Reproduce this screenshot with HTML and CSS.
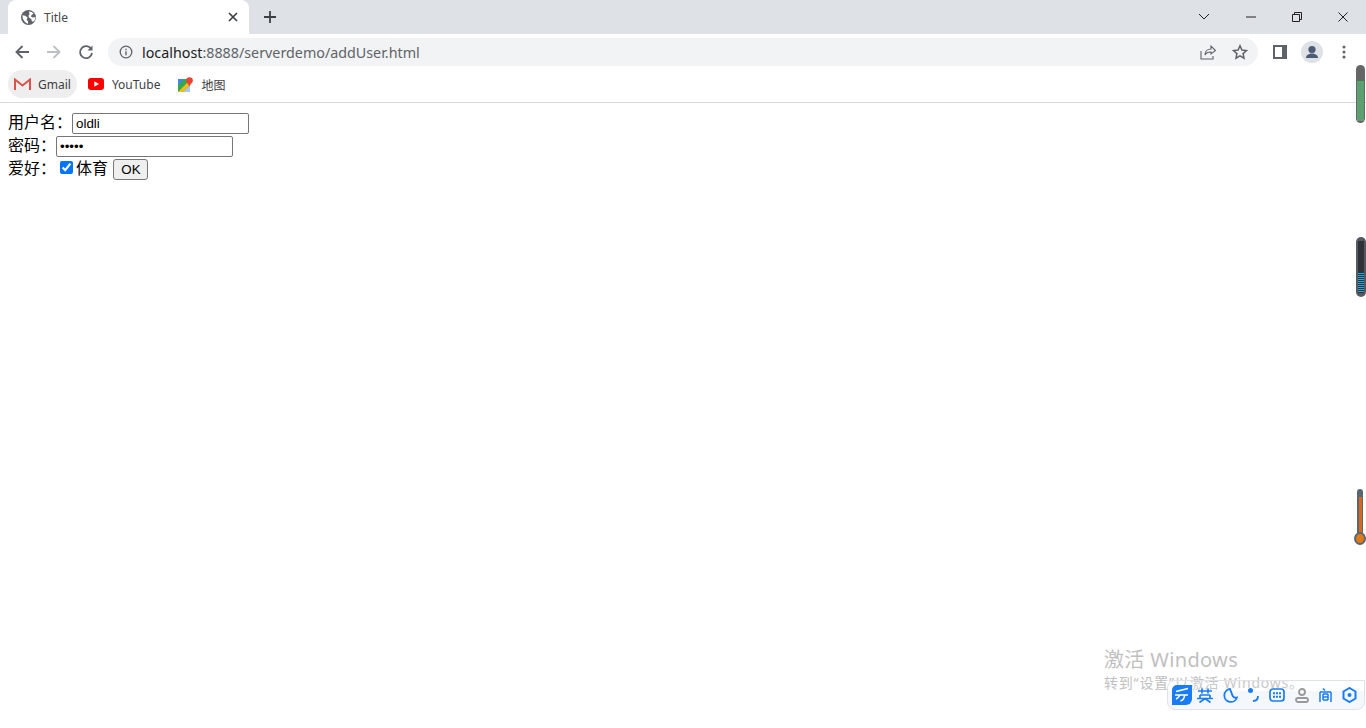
FILE: index.html
```html
<!DOCTYPE html>
<html lang="zh">
<head>
<meta charset="utf-8">
<title>Title</title>
<link rel="stylesheet" href="styles.css">
</head>
<body>
<header class="chrome">
  <div class="tabstrip">
    <div class="tab">
      <svg class="globe" width="15" height="15" viewBox="0 0 16 16"><circle cx="8" cy="8" r="8" fill="#5f6368"/><path d="M1.500 5.500l3 .5 2.500 2-1 2.500 1.500 1.500v3l-3-2-2.500-3.500zM8.500 1.500l3 .5 2 2-2 1-1 2 2 1 3-.5-.5 3-2 2-1.500-.5-.5-2.500-2.500-1.500-.5-2 1-1.500z" fill="#fff"/></svg>
      <span class="tabtitle">Title</span>
      <svg class="tabclose" width="10" height="10" viewBox="0 0 10 10"><path d="M1 1l8 8M9 1l-8 8" stroke="#3c4043" stroke-width="1.700"/></svg>
    </div>
    <svg class="newtab" width="14" height="14" viewBox="0 0 14 14"><path d="M7 1v12M1 7h12" stroke="#3c4043" stroke-width="1.800"/></svg>
    <div class="winbtns">
      <svg class="wb-chev" width="12" height="8" viewBox="0 0 12 8"><path d="M1 1l5 5 5-5" fill="none" stroke="#202124" stroke-width="1"/></svg>
      <svg class="wb-min" width="10" height="2" viewBox="0 0 10 2"><path d="M0 1h10" stroke="#202124" stroke-width="1"/></svg>
      <svg class="wb-max" width="10" height="10" viewBox="0 0 10 10"><path d="M.5 2.500h7v7h-7zM2.500 2.500v-2h7v7h-2" fill="none" stroke="#202124" stroke-width="1"/></svg>
      <svg class="wb-close" width="10" height="10" viewBox="0 0 10 10"><path d="M.5.5l9 9M9.500.5l-9 9" stroke="#202124" stroke-width="1"/></svg>
    </div>
  </div>
  <div class="toolbar">
    <svg class="nav" width="16" height="16" viewBox="0 0 16 16"><path d="M15 8H2.500M8.500 2L2.500 8l6 6" fill="none" stroke="#5f6368" stroke-width="1.900"/></svg>
    <svg class="nav" width="16" height="16" viewBox="0 0 16 16"><path d="M1 8h12.500M7.500 2l6 6-6 6" fill="none" stroke="#bdc1c6" stroke-width="1.900"/></svg>
    <svg class="nav" width="16" height="16" viewBox="0 0 16 16"><path d="M13.300 5.200A6 6 0 1 0 14 9" fill="none" stroke="#5f6368" stroke-width="1.800"/><path d="M14.500 1.500v5h-5z" fill="#5f6368"/></svg>
    <div class="omnibox">
      <svg class="info" width="14" height="14" viewBox="0 0 14 14"><circle cx="7" cy="7" r="5.800" fill="none" stroke="#5f6368" stroke-width="1.300"/><path d="M7 6.200v4M7 3.800v1.400" stroke="#5f6368" stroke-width="1.400"/></svg>
      <span class="url"><span class="host">localhost</span>:8888/serverdemo/addUser.html</span>
      <svg class="share" width="16" height="16" viewBox="0 0 16 16"><path d="M1 7v8h12v-3M5 11c0-4 3-6 6-6V2l4.500 4.500L11 10V8c-3 0-5 1-6 3z" fill="none" stroke="#5f6368" stroke-width="1.100"/></svg>
      <svg class="star" width="16" height="16" viewBox="0 0 16 16"><path d="M8 1.800l1.900 4.200 4.600.5-3.400 3.100.9 4.600L8 11.900l-4 2.300.9-4.600L1.500 6.500 6.100 6z" fill="none" stroke="#5f6368" stroke-width="1.500"/></svg>
    </div>
    <svg class="panel" width="14" height="14" viewBox="0 0 14 14"><path d="M0 0h14v14H0zM2 2v10h7V2z" fill="#5f6368" fill-rule="evenodd"/></svg>
    <svg class="avatar" width="22" height="22" viewBox="0 0 22 22"><circle cx="11" cy="11" r="11" fill="#dee1e6"/><circle cx="11" cy="8.500" r="3.600" fill="#4d5a75"/><path d="M5 17c0-3 3-4.500 6-4.500s6 1.500 6 4.500z" fill="#4d5a75"/></svg>
    <svg class="menu" width="4" height="14" viewBox="0 0 4 14"><circle cx="2" cy="2" r="1.500" fill="#5f6368"/><circle cx="2" cy="7" r="1.500" fill="#5f6368"/><circle cx="2" cy="12" r="1.500" fill="#5f6368"/></svg>
  </div>
  <nav class="bookmarks">
    <div class="bm bm-active">
      <svg width="17" height="12" viewBox="0 0 17 12"><path d="M1 12V1.500l7.500 6 7.500-6V12" fill="none" stroke="#d9534a" stroke-width="2"/></svg>
      <span>Gmail</span>
    </div>
    <div class="bm">
      <svg width="16" height="12" viewBox="0 0 16 12"><rect width="16" height="12" rx="3" fill="#f00"/><path d="M6.300 3.300v5.400L11 6z" fill="#fff"/></svg>
      <span>YouTube</span>
    </div>
    <div class="bm">
      <svg width="15" height="15" viewBox="0 0 15 15"><rect y="2" width="12" height="13" fill="#34a853"/><path d="M0 15L12 3v5l-7 7z" fill="#fbbc04"/><path d="M0 2h6L0 8z" fill="#4285f4"/><path d="M5 15l7-7v7z" fill="#a8c7fa"/><circle cx="11.500" cy="3.500" r="3.300" fill="#ea4335"/><path d="M9 5l2.500 4.500L14 5z" fill="#ea4335"/></svg>
      <span class="cjk">地图</span>
    </div>
  </nav>
</header>
<main class="page">
  <form class="form">
    <div class="row">用户名：<input class="field" type="text" value="oldli"></div>
    <div class="row">密码：<input class="field" type="password" value="12345"></div>
    <div class="row">爱好：<input class="check" type="checkbox" checked>体育 <input class="submit" type="submit" value="OK"></div>
  </form>
</main>

<div class="gauge gauge-net"><div class="gauge-fill green"></div></div>
<div class="gauge gauge-mem"><div class="gauge-fill blue"></div></div>
<div class="thermo"><div class="thermo-bar"></div><div class="thermo-bulb"></div></div>

<div class="watermark">
  <div class="wm-1">激活 Windows</div>
  <div class="wm-2">转到“设置”以激活 Windows。</div>
</div>

<div class="ime">
  <svg class="ime-logo" width="20" height="20" viewBox="0 0 20 20"><path d="M5 0h15v14a6 6 0 0 1-6 6H0V5a5 5 0 0 1 5-5z" fill="#1a7cf5"/><path d="M4 6.500l12-3M3 10h13M12.500 10c0 3-1 5-4 6M8 10c-1 2-2 3-4 4" fill="none" stroke="#fff" stroke-width="1.500"/></svg>
  <svg width="16" height="15" viewBox="0 0 16 15"><path d="M1 3h14M5 .5v5M11 .5v5M3 7h10M3 7v3.500M13 7v3.500M0 10.500h16M2.500 14.500L8 10.500l5.500 4" fill="none" stroke="#1a7cf5" stroke-width="1.700"/></svg>
  <svg width="15" height="15" viewBox="0 0 15 15"><path d="M7 1a6.500 6.500 0 1 0 7 8.500C9 11 9 5 7 1z" fill="none" stroke="#1a7cf5" stroke-width="1.800"/></svg>
  <svg width="11" height="14" viewBox="0 0 11 14"><circle cx="2.500" cy="2.500" r="2.500" fill="#1a7cf5"/><path d="M10 8c0 3-2 5-5 5" fill="none" stroke="#1a7cf5" stroke-width="1.800"/></svg>
  <svg width="16" height="14" viewBox="0 0 16 14"><rect x="1" y="1" width="14" height="12" rx="3" fill="none" stroke="#1a7cf5" stroke-width="1.700"/><path d="M4 5.200h8M4 8.800h8" stroke="#1a7cf5" stroke-width="2" stroke-dasharray="2 1"/></svg>
  <svg width="14" height="15" viewBox="0 0 14 15"><circle cx="7" cy="4" r="3" fill="none" stroke="#999" stroke-width="1.800"/><rect x="1" y="10" width="12" height="4" rx="2" fill="none" stroke="#999" stroke-width="1.800"/></svg>
  <svg width="13" height="14" viewBox="0 0 13 14"><path d="M4 .5l2 2M1 4h11M1 4v10M12 4v10M4 6h5M4 9h5M4 12h5M4 6v6M9 6v6" fill="none" stroke="#1a7cf5" stroke-width="1.500"/></svg>
  <svg width="15" height="16" viewBox="0 0 15 16"><path d="M7.500 1l6 3.500v7l-6 3.500-6-3.500v-7z" fill="none" stroke="#1a7cf5" stroke-width="2"/><circle cx="7.500" cy="8" r="2" fill="#1a7cf5"/></svg>
</div>
</body>
</html>
```
FILE: styles.css
```css
html, body { margin: 0; padding: 0; height: 100%; overflow: hidden; background: #fff; }
body { font-family: "Liberation Sans", "Noto Sans CJK SC", sans-serif; color: #000; }

.chrome { border-bottom: 1px solid #d9dadc; font-family: "Noto Sans", "Noto Sans CJK SC", sans-serif; }

.tabstrip { height: 34px; background: #dee1e6; display: flex; align-items: center; padding-left: 8px; }
.tab { width: 241px; height: 34px; box-sizing: border-box; background: #fff; border-radius: 8px 8px 0 0; display: flex; align-items: center; padding: 0 11px 0 13px; }
.globe { flex: none; }
.tabtitle { font-size: 12px; color: #45474a; margin-left: 8px; flex: 1; }
.newtab { margin-left: 14px; }
.winbtns { margin-left: auto; display: flex; align-items: center; }
.wb-chev { margin-right: 36px; }
.wb-min { margin-right: 36px; }
.wb-max { margin-right: 36px; }
.wb-close { margin-right: 18px; }

.toolbar { height: 34px; box-sizing: border-box; padding: 2px 0 0 14px; background: #fff; display: flex; align-items: center; }
.nav { margin-right: 16px; flex: none; }
.omnibox { width: 1150px; height: 28px; margin-left: -2px; background: #f1f3f4; border-radius: 14px; display: flex; align-items: center; padding: 0 10px 0 11px; box-sizing: border-box; }
.info { flex: none; }
.url { font-size: 14.300px; color: #5f6368; margin-left: 9px; flex: 1; white-space: nowrap; }
.host { color: #202124; }
.share { margin-right: 16px; }
.panel { margin-left: 15px; }
.avatar { margin-left: 14px; }
.menu { margin-left: 19px; }

.bookmarks { height: 34px; box-sizing: border-box; padding: 0 0 2px 8px; background: #fff; display: flex; align-items: center; gap: 4px; }
.bm { height: 28px; display: flex; align-items: center; gap: 8px; padding: 0 7px; font-size: 12px; color: #3c4043; border-radius: 14px; }
.bm-active { background: #eeeeee; gap: 7px; padding: 0 6px; }
.cjk { font-family: "Noto Sans CJK SC", sans-serif; }

.page { padding: 8px; }
.row { font-size: 16px; line-height: 23px; height: 23px; white-space: nowrap; font-family: "Liberation Sans", "Noto Sans CJK SC", sans-serif; }
.field { box-sizing: border-box; width: 177px; height: 21px; padding: 1px 3px; border: 1px solid #767676; border-radius: 2px; font: 13.333px "Liberation Sans", sans-serif; vertical-align: 0; margin: 0; }
.check { width: 13px; height: 13px; margin: 3px 3px 3px 4px; accent-color: #0075ff; vertical-align: 0; }
.submit { box-sizing: border-box; width: 35px; height: 21px; padding: 0; font: 13.333px "Liberation Sans", sans-serif; border: 1px solid #767676; border-radius: 3px; background: #efefef; margin: 0 0 0 1px; vertical-align: 0; }

.gauge { position: absolute; left: 1356px; width: 9px; background: #666; border-radius: 5px; box-sizing: border-box; padding: 0 1px; display: flex; align-items: flex-end; }
.gauge-net { top: 65px; height: 58px; padding-bottom: 2px; }
.gauge-mem { top: 237px; height: 60px; background: #555a60; padding: 4px 2px; width: 10px; }
.gauge-fill { width: 100%; }
.green { height: 40px; background: repeating-linear-gradient(to bottom, #3fb562 0 1px, #7a8a7e 1px 2px); }
.blue { height: 100%; background: linear-gradient(to bottom, #2f3338 0 31px, transparent 31px), repeating-linear-gradient(to bottom, #29a5e0 0 1px, #2f3338 1px 2px); }

.thermo { position: absolute; left: 1354px; top: 489px; width: 12px; height: 56px; }
.thermo-bar { position: absolute; left: 3px; top: 0; width: 6px; height: 46px; background: #5a6670; border-radius: 3px 3px 0 0; }
.thermo-bar::after { content: ""; position: absolute; left: 1.500px; top: 8px; width: 3px; height: 38px; background: #d9681c; }
.thermo-bulb { position: absolute; left: 0; bottom: 0; width: 12px; height: 13px; box-sizing: border-box; border: 2px solid #5a6670; border-radius: 50%; background: #e07a17; }

.watermark { position: absolute; left: 1104px; top: 648px; color: #c0c0c0; white-space: nowrap; font-family: "Noto Sans", "Noto Sans CJK SC", sans-serif; }
.wm-1 { font-size: 20px; line-height: 24px; letter-spacing: .35px; }
.wm-2 { font-size: 14px; line-height: 22px; letter-spacing: .8px; }

.ime { position: absolute; left: 1167px; top: 680px; width: 198px; height: 30px; box-sizing: border-box; background: linear-gradient(to bottom, rgba(244, 248, 253, .15) 0 10px, #f4f8fd 10px); border: 1px solid #dfe3e8; border-radius: 8px 0 8px 8px; display: flex; align-items: center; padding-left: 4px; gap: 10px; }
.ime-logo { margin-right: -5px; }
```
